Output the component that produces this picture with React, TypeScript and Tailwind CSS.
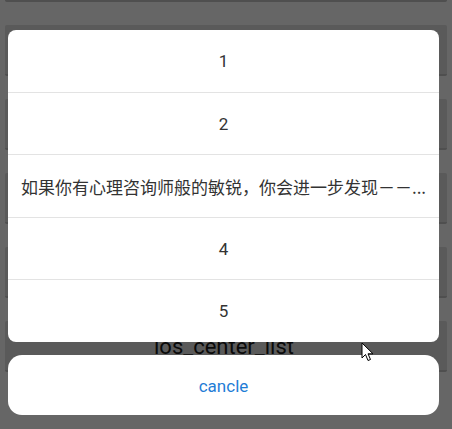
import React from 'react';

const items = ['1', '2', '如果你有心理咨询师般的敏锐，你会进一步发现－－...', '4', '5'];

function BgButton({ label }: { label?: string }) {
    return (
        <div className="h-[51px] mx-[5px] bg-[#5a5a5a] border-b-2 border-[#4f4f4f] rounded-[2px] flex items-center justify-center">
            {label && <span className="text-[22px] text-[#0a0a0a] leading-none pt-[3px] mr-[4px]">{label}</span>}
        </div>
    );
}

export default function App() {
    return (
        <div className="relative w-[452px] h-[429px] overflow-hidden bg-[#666666] font-['Roboto','Noto_Sans_CJK_SC',sans-serif]">
            {/* Screen underneath the dim layer */}
            <div className="flex flex-col gap-[23px] mt-[-49px]">
                <BgButton />
                <BgButton />
                <BgButton />
                <BgButton />
                <BgButton />
                <BgButton label="ios_center_list" />
            </div>

            {/* Action sheet */}
            <div className="absolute inset-0 pt-[30px] pl-[8px]">
                <div className="w-[431px] h-[312px] bg-white rounded-[8px] flex flex-col overflow-hidden">
                    {items.map((t, i) => (
                        <div
                            key={i}
                            className={`flex-1 flex items-center justify-center px-[10px] pt-[2px] ${i > 0 ? 'border-t border-[#e3e3e3]' : ''}`}
                        >
                            <span
                                className={`whitespace-nowrap text-[#333333] ${i === 2 ? "text-[17px] font-['Noto_Sans_CJK_SC',sans-serif]" : 'text-[17px]'}`}
                            >
                                {t}
                            </span>
                        </div>
                    ))}
                </div>
                <div className="mt-[13px] w-[431px] h-[60px] bg-white rounded-[14px] flex items-center justify-center pt-[3px]">
                    <span className="text-[17px] text-[#1f7dd6]">cancle</span>
                </div>
            </div>

            {/* Mouse pointer */}
            <svg className="absolute left-[361px] top-[342px]" width="14" height="21" viewBox="0 0 14 21">
                <path d="M1 1 L1 16 L4.5 12.5 L7 18.5 L9.5 17.5 L7 11.8 L12 11.8 Z" fill="#ffffff" stroke="#000000" strokeWidth="1" strokeLinejoin="round" />
            </svg>
        </div>
    );
}
